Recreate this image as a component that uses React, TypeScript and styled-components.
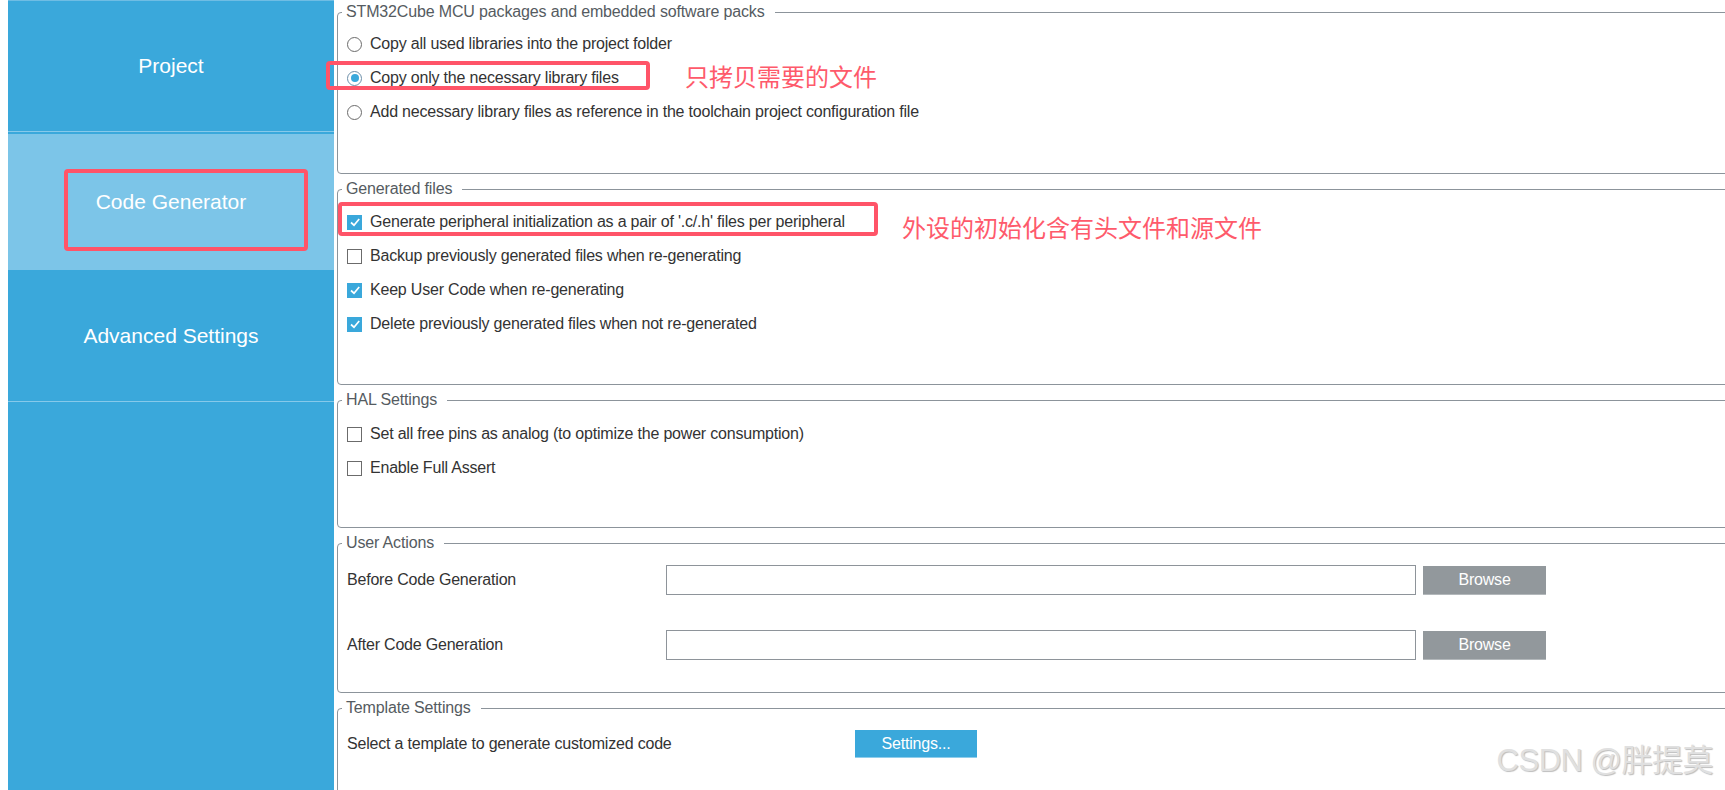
import React from "react";
import styled, { createGlobalStyle } from "styled-components";

const BLUE = "#3aa8db";
const BLUE_LIGHT = "#7cc5e8";
const RED = "#ff5468";
const LINE = "#8c949b";

const GlobalStyle = createGlobalStyle`
  html, body {
    margin: 0;
    padding: 0;
    overflow: hidden;
    background: #fff;
  }
  body {
    font-family: "Liberation Sans", Arial, "Noto Sans CJK SC", sans-serif;
  }
`;

const Page = styled.div`
  position: relative;
  display: flex;
  width: 1725px;
  height: 790px;
  padding-left: 8px;
  box-sizing: border-box;
  overflow: hidden;
  background: #fff;
`;

const Sidebar = styled.nav`
  width: 326px;
  flex-shrink: 0;
  display: flex;
  flex-direction: column;
  background: ${BLUE};
  border-top: 1px solid #6fbde4;
`;

const NavItem = styled.div<{ $active?: boolean; $height: number; $gap?: number }>`
  height: ${(p) => p.$height}px;
  margin-top: ${(p) => p.$gap || 0}px;
  display: flex;
  align-items: center;
  justify-content: center;
  background: ${(p) => (p.$active ? BLUE_LIGHT : BLUE)};
  border-bottom: ${(p) => (p.$active ? "none" : "1px solid #86c9ea")};
  color: #fff;
  font-size: 21px;
  box-sizing: border-box;
`;

const Main = styled.main`
  flex: 1;
  display: flex;
  flex-direction: column;
  gap: 6px;
  padding: 3px 0 0 3px;
  margin-right: -40px;
`;

const Group = styled.fieldset<{ $height: number }>`
  margin: 0;
  height: ${(p) => p.$height}px;
  flex-shrink: 0;
  box-sizing: border-box;
  border: 1px solid ${LINE};
  border-radius: 4px;
  padding: 0 0 0 9px;
  min-width: 0;
`;

const Legend = styled.legend`
  margin-left: -5px;
  padding: 0 10px 0 4px;
  font-size: 16px;
  line-height: 18px;
  letter-spacing: -0.15px;
  color: #555b61;
`;

const OptionList = styled.div<{ $top: number }>`
  display: flex;
  flex-direction: column;
  padding-top: ${(p) => p.$top}px;
`;

const Option = styled.label`
  height: 34px;
  display: flex;
  align-items: center;
  gap: 8px;
  font-size: 16px;
  letter-spacing: -0.2px;
  color: #333;
`;

const RadioMark = styled.span<{ $on?: boolean }>`
  width: 15px;
  height: 15px;
  box-sizing: border-box;
  border-radius: 50%;
  border: 1px solid ${(p) => (p.$on ? "#6d8fa9" : "#6b6b6b")};
  background: #fff;
  display: flex;
  align-items: center;
  justify-content: center;
  &::after {
    content: "";
    width: 8px;
    height: 8px;
    border-radius: 50%;
    background: ${(p) => (p.$on ? BLUE : "transparent")};
  }
`;

const CheckMark = styled.span<{ $on?: boolean }>`
  width: 15px;
  height: 15px;
  box-sizing: border-box;
  border: 1px solid ${(p) => (p.$on ? BLUE : "#6b6b6b")};
  background: ${(p) => (p.$on ? BLUE : "#fff")};
  display: flex;
  align-items: center;
  justify-content: center;
`;

const FieldGrid = styled.div<{ $cols: string; $rowGap?: number }>`
  display: grid;
  grid-template-columns: ${(p) => p.$cols};
  column-gap: 7px;
  row-gap: ${(p) => p.$rowGap || 0}px;
  align-items: center;
  padding-top: 13px;
`;

const FieldLabel = styled.span`
  font-size: 16px;
  letter-spacing: -0.2px;
  color: #333;
`;

const PathInput = styled.input`
  height: 30px;
  width: 750px;
  box-sizing: border-box;
  border: 1px solid #8e949a;
  margin: 0;
  padding: 0 6px;
  font: inherit;
  outline: none;
`;

const FlatButton = styled.button<{ $tone: "gray" | "blue"; $w: number; $h: number }>`
  width: ${(p) => p.$w}px;
  height: ${(p) => p.$h}px;
  border: none;
  border-bottom: 1px solid ${(p) => (p.$tone === "gray" ? "#b3b8bb" : "#8fcdeb")};
  background: ${(p) => (p.$tone === "gray" ? "#92989c" : BLUE)};
  color: #fff;
  font-family: inherit;
  font-size: 16px;
  letter-spacing: -0.2px;
  padding: 0;
`;

const Marker = styled.div<{ $x: number; $y: number; $w: number; $h: number }>`
  position: absolute;
  left: ${(p) => p.$x}px;
  top: ${(p) => p.$y}px;
  width: ${(p) => p.$w}px;
  height: ${(p) => p.$h}px;
  box-sizing: border-box;
  border: 4px solid ${RED};
  border-radius: 4px;
  pointer-events: none;
`;

const Note = styled.div<{ $x: number; $y: number }>`
  position: absolute;
  left: ${(p) => p.$x}px;
  top: ${(p) => p.$y}px;
  font-family: "Noto Sans CJK SC", sans-serif;
  font-size: 24px;
  line-height: 24px;
  color: #fe5a6b;
  white-space: nowrap;
`;

const Watermark = styled.div`
  position: absolute;
  right: 12px;
  bottom: 12px;
  font-family: "Liberation Sans", "Noto Sans CJK SC", sans-serif;
  font-size: 31px;
  line-height: 34px;
  color: #e0e0e0;
  letter-spacing: -0.5px;
  text-shadow: 1px 1px 1px #bdbdbd;
  white-space: nowrap;
`;

const Tick = () => (
  <svg width="12" height="12" viewBox="0 0 12 12">
    <polyline points="2,6.5 5,9.2 10.2,3" fill="none" stroke="#fff" strokeWidth="1.7" />
  </svg>
);

const Radio = ({ on, children }: { on?: boolean; children: React.ReactNode }) => (
  <Option>
    <RadioMark $on={on} />
    {children}
  </Option>
);

const Check = ({ on, children }: { on?: boolean; children: React.ReactNode }) => (
  <Option>
    <CheckMark $on={on}>{on && <Tick />}</CheckMark>
    {children}
  </Option>
);

export default function App() {
  return (
    <>
      <GlobalStyle />
      <Page>
        <Sidebar>
          <NavItem $height={131}>Project</NavItem>
          <NavItem $height={136} $gap={2} $active>
            Code Generator
          </NavItem>
          <NavItem $height={132}>Advanced Settings</NavItem>
        </Sidebar>

        <Main>
          <Group $height={171}>
            <Legend>STM32Cube MCU packages and embedded software packs</Legend>
            <OptionList $top={6}>
              <Radio>Copy all used libraries into the project folder</Radio>
              <Radio on>Copy only the necessary library files</Radio>
              <Radio>Add necessary library files as reference in the toolchain project configuration file</Radio>
            </OptionList>
          </Group>

          <Group $height={205}>
            <Legend>Generated files</Legend>
            <OptionList $top={7}>
              <Check on>Generate peripheral initialization as a pair of '.c/.h' files per peripheral</Check>
              <Check>Backup previously generated files when re-generating</Check>
              <Check on>Keep User Code when re-generating</Check>
              <Check on>Delete previously generated files when not re-generated</Check>
            </OptionList>
          </Group>

          <Group $height={137}>
            <Legend>HAL Settings</Legend>
            <OptionList $top={8}>
              <Check>Set all free pins as analog (to optimize the power consumption)</Check>
              <Check>Enable Full Assert</Check>
            </OptionList>
          </Group>

          <Group $height={159}>
            <Legend>User Actions</Legend>
            <FieldGrid $cols="312px 750px 123px" $rowGap={35}>
              <FieldLabel>Before Code Generation</FieldLabel>
              <PathInput />
              <FlatButton $tone="gray" $w={123} $h={29}>Browse</FlatButton>
              <FieldLabel>After Code Generation</FieldLabel>
              <PathInput />
              <FlatButton $tone="gray" $w={123} $h={29}>Browse</FlatButton>
            </FieldGrid>
          </Group>

          <Group $height={140}>
            <Legend>Template Settings</Legend>
            <FieldGrid $cols="501px 122px">
              <FieldLabel>Select a template to generate customized code</FieldLabel>
              <FlatButton $tone="blue" $w={122} $h={28}>Settings...</FlatButton>
            </FieldGrid>
          </Group>
        </Main>

        <Marker $x={326} $y={61} $w={324} $h={29} />
        <Note $x={685} $y={64}>只拷贝需要的文件</Note>
        <Marker $x={338} $y={202} $w={540} $h={34} />
        <Note $x={902} $y={215}>外设的初始化含有头文件和源文件</Note>
        <Marker $x={64} $y={169} $w={244} $h={82} />
        <Watermark>CSDN @胖提莫</Watermark>
      </Page>
    </>
  );
}
